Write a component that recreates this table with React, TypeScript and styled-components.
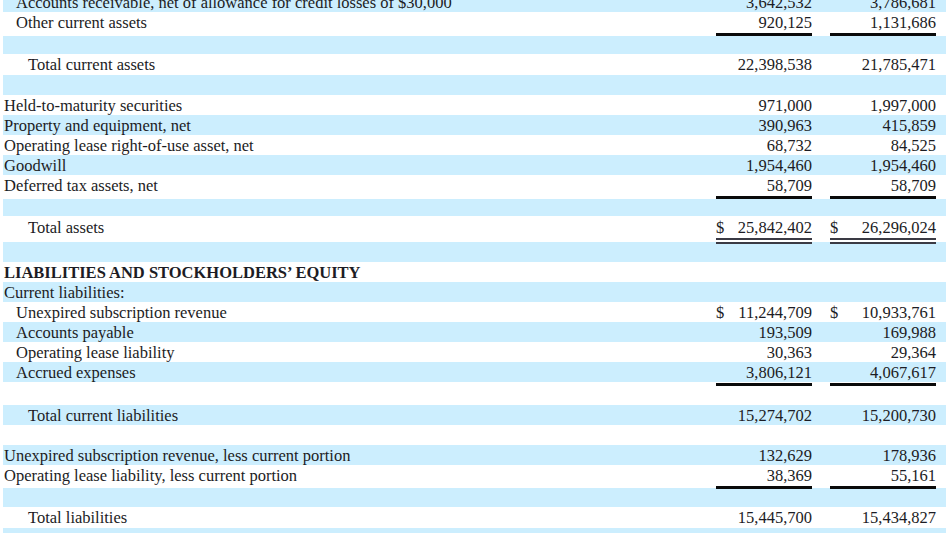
import React from "react";
import styled, { createGlobalStyle } from "styled-components";

const GlobalStyle = createGlobalStyle`
  html, body {
    margin: 0;
    padding: 0;
    background: #ffffff;
    overflow: hidden;
  }
  body {
    font-family: "Liberation Serif", "Times New Roman", serif;
    color: #1c1c24;
  }
`;

type Line = "single" | "double" | undefined;

interface RowData {
  label?: string;
  indent?: number;
  bold?: boolean;
  h: number;
  pt?: number;
  v1?: string;
  v2?: string;
  d1?: boolean;
  d2?: boolean;
  line?: Line;
}

const rows: RowData[] = [
  { label: "Accounts receivable, net of allowance for credit losses of $30,000", indent: 1, h: 20, v1: "3,642,532", v2: "3,786,681" },
  { label: "Other current assets", indent: 1, h: 24, v1: "920,125", v2: "1,131,686", line: "single" },
  { h: 18 },
  { label: "Total current assets", indent: 2, h: 21, v1: "22,398,538", v2: "21,785,471" },
  { h: 20 },
  { label: "Held-to-maturity securities", h: 20, v1: "971,000", v2: "1,997,000" },
  { label: "Property and equipment, net", h: 20, v1: "390,963", v2: "415,859" },
  { label: "Operating lease right-of-use asset, net", h: 20, v1: "68,732", v2: "84,525" },
  { label: "Goodwill", h: 20, v1: "1,954,460", v2: "1,954,460" },
  { label: "Deferred tax assets, net", h: 24, v1: "58,709", v2: "58,709", line: "single" },
  { h: 17 },
  { label: "Total assets", indent: 2, h: 26, pt: 1, v1: "25,842,402", v2: "26,296,024", d1: true, d2: true, line: "double" },
  { h: 20 },
  { label: "LIABILITIES AND STOCKHOLDERS\u2019 EQUITY", bold: true, h: 20 },
  { label: "Current liabilities:", h: 20 },
  { label: "Unexpired subscription revenue", indent: 1, h: 20, v1: "11,244,709", v2: "10,933,761", d1: true, d2: true },
  { label: "Accounts payable", indent: 1, h: 20, v1: "193,509", v2: "169,988" },
  { label: "Operating lease liability", indent: 1, h: 20, v1: "30,363", v2: "29,364" },
  { label: "Accrued expenses", indent: 1, h: 23, v1: "3,806,121", v2: "4,067,617", line: "single" },
  { h: 20 },
  { label: "Total current liabilities", indent: 2, h: 20, v1: "15,274,702", v2: "15,200,730" },
  { h: 20 },
  { label: "Unexpired subscription revenue, less current portion", h: 20, v1: "132,629", v2: "178,936" },
  { label: "Operating lease liability, less current portion", h: 23, v1: "38,369", v2: "55,161", line: "single" },
  { h: 19 },
  { label: "Total liabilities", indent: 2, h: 21, pt: 0, v1: "15,445,700", v2: "15,434,827" },
  { h: 20 },
];

const Sheet = styled.div`
  margin-top: -8px;
  padding-left: 3px;
  width: 943px;
  font-size: 16.5px;
  line-height: 20px;
`;

const Row = styled.div<{ $blue: boolean; $h: number; $pt: number; $line: Line }>`
  display: grid;
  grid-template-columns: 1fr 96px 18px 106px 10px;
  height: ${(p) => p.$h}px;
  padding-top: ${(p) => p.$pt}px;
  box-sizing: border-box;
  background: ${(p) =>
    p.$blue
      ? p.$line === "single"
        ? "linear-gradient(#cceefe 0 20px, #ffffff 20px)"
        : "#cceefe"
      : "#ffffff"};
`;

const Label = styled.div<{ $indent: number; $bold: boolean }>`
  padding-left: ${(p) => 1 + p.$indent * 12}px;
  padding-top: 1px;
  font-weight: ${(p) => (p.$bold ? 700 : 400)};
  white-space: nowrap;
`;

const Value = styled.div<{ $line: Line }>`
  display: flex;
  justify-content: space-between;
  align-items: flex-start;
  box-sizing: border-box;
  padding-top: 1px;
  border-bottom: ${(p) =>
    p.$line === "single"
      ? "3px solid #0a0a0a"
      : p.$line === "double"
      ? "6px double #3a3a44"
      : "none"};
  white-space: nowrap;
`;

const Spacer = styled.div``;

export default function App() {
  return (
    <>
      <GlobalStyle />
      <Sheet>
        {rows.map((r, i) => (
          <Row key={i} $blue={i % 2 === 0} $h={r.h} $pt={r.pt ?? 0} $line={r.line}>
            <Label $indent={r.indent ?? 0} $bold={!!r.bold}>
              {r.label ?? ""}
            </Label>
            <Value $line={r.v1 ? r.line : undefined}>
              <span>{r.d1 ? "$" : ""}</span>
              <span>{r.v1 ?? ""}</span>
            </Value>
            <Spacer />
            <Value $line={r.v2 ? r.line : undefined}>
              <span>{r.d2 ? "$" : ""}</span>
              <span>{r.v2 ?? ""}</span>
            </Value>
            <Spacer />
          </Row>
        ))}
      </Sheet>
    </>
  );
}
